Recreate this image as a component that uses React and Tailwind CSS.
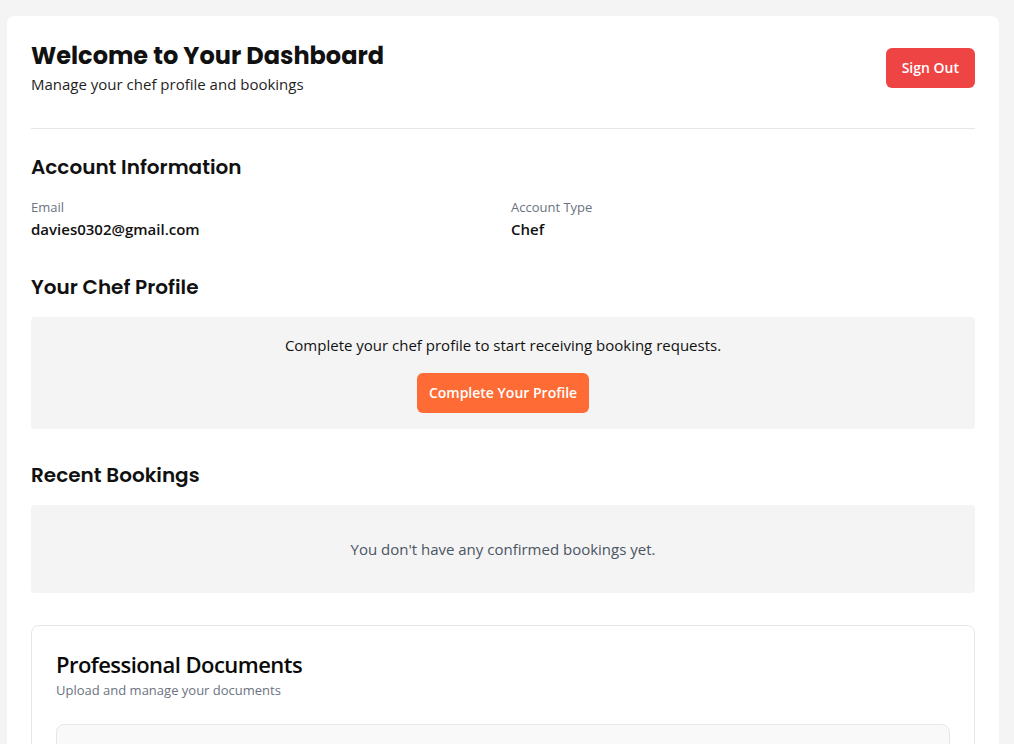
import React from "react";

const heading = { fontFamily: '"Poppins", Inter, "Noto Sans", sans-serif' };
const body = { fontFamily: '"Segoe UI", "Open Sans", "Noto Sans", sans-serif' };

function SectionTitle({ children, className = "" }) {
  return (
    <h2 className={`text-xl leading-7 font-semibold text-[#111111] ${className}`} style={heading}>
      {children}
    </h2>
  );
}

function InfoItem({ label, value }) {
  return (
    <div>
      <div className="text-[13px] leading-5 text-[#6b7280]">{label}</div>
      <div className="text-[15px] leading-6 font-semibold text-[#111111]">{value}</div>
    </div>
  );
}

export default function App() {
  return (
    <div className="min-h-screen bg-[#f4f4f4] pt-4" style={body}>
      <div className="ml-[7px] w-[992px] rounded-lg bg-white p-6">
        <div className="flex items-center justify-between border-b border-[#e5e7eb] pb-8">
          <div>
            <h1 className="text-2xl leading-8 font-bold text-[#111111]" style={heading}>
              Welcome to Your Dashboard
            </h1>
            <p className="text-[15px] leading-6 text-[#1f1f1f]">Manage your chef profile and bookings</p>
          </div>
          <button className="h-10 rounded-md bg-[#ef4444] px-4 text-sm font-semibold text-white">
            Sign Out
          </button>
        </div>

        <SectionTitle className="mt-6">Account Information</SectionTitle>
        <div className="mt-4 grid grid-cols-2 gap-4">
          <InfoItem label="Email" value="davies0302@gmail.com" />
          <InfoItem label="Account Type" value="Chef" />
        </div>

        <SectionTitle className="mt-8">Your Chef Profile</SectionTitle>
        <div className="mt-4 flex flex-col items-center rounded bg-[#f4f4f4] p-4">
          <p className="text-[15px] leading-6 text-[#111111]">
            Complete your chef profile to start receiving booking requests.
          </p>
          <button className="mt-4 h-10 rounded-md bg-[#ff6b35] px-3 text-sm font-semibold text-white">
            Complete Your Profile
          </button>
        </div>

        <SectionTitle className="mt-8">Recent Bookings</SectionTitle>
        <div className="mt-4 rounded bg-[#f4f4f4] p-8 text-center">
          <p className="text-[15px] leading-6 text-[#4b5563]">You don't have any confirmed bookings yet.</p>
        </div>

        <div className="mt-8 rounded-lg border border-[#e5e7eb] p-6">
          <h3 className="text-[22px] leading-7 font-semibold tracking-tight text-[#0a0a0a]">
            Professional Documents
          </h3>
          <p className="mt-0.5 text-[13px] leading-5 text-[#6b7280]">Upload and manage your documents</p>
          <div className="mt-6 h-40 rounded-lg border border-[#e5e7eb] bg-[#f9f9f9]" />
        </div>
      </div>
    </div>
  );
}
